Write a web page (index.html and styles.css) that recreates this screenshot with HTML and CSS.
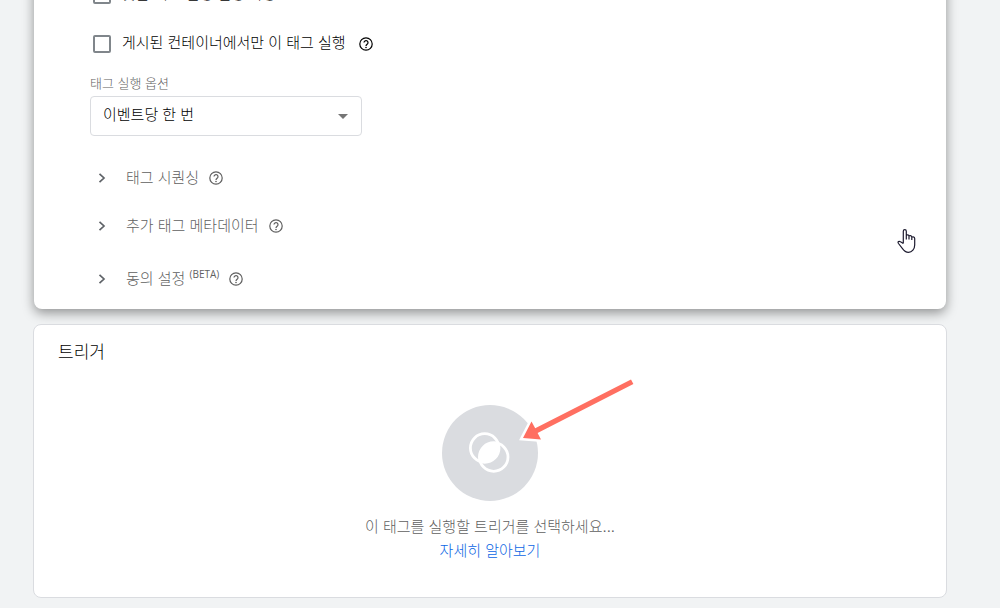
FILE: index.html
```html
<!DOCTYPE html>
<html lang="ko">
  <head>
    <meta charset="UTF-8" />
    <meta name="viewport" content="width=device-width, initial-scale=1.0" />
    <title>태그 구성</title>
    <link rel="stylesheet" href="styles.css">
  </head>

  <body>
    <svg class="symbols" aria-hidden="true">
      <symbol id="help" viewBox="0 0 14 14">
        <circle cx="7" cy="7" r="6.2" fill="none" stroke="currentColor" stroke-width="1.2" />
        <path d="M5 5.600a2 2 0 1 1 3.300 1.500C7.500 7.700 7 8 7 8.900" fill="none" stroke="currentColor" stroke-width="1.2" />
        <circle cx="7" cy="10.500" r="0.800" fill="currentColor" />
      </symbol>
      <symbol id="chevron" viewBox="0 0 8 10">
        <path d="M1.500 .8 6 5 1.500 9.200" fill="none" stroke="currentColor" stroke-width="1.700" />
      </symbol>
    </svg>

    <main>
      <section class="card settings">
        <div class="check-row">
          <input type="checkbox" id="schedule" />
          <label for="schedule">맞춤 태그 실행 일정 사용</label>
        </div>
        <div class="check-row">
          <input type="checkbox" id="published" />
          <label for="published">게시된 컨테이너에서만 이 태그 실행</label>
          <button class="help" aria-label="도움말"><svg><use href="#help" /></svg></button>
        </div>

        <label class="field-label" for="firing">태그 실행 옵션</label>
        <div class="select">
          <select id="firing">
            <option>이벤트당 한 번</option>
          </select>
        </div>

        <div class="expanders">
          <div class="expander">
            <button class="toggle" aria-expanded="false"><svg><use href="#chevron" /></svg><span>태그 시퀀싱</span></button>
            <button class="help" aria-label="도움말"><svg><use href="#help" /></svg></button>
          </div>
          <div class="expander">
            <button class="toggle" aria-expanded="false"><svg><use href="#chevron" /></svg><span>추가 태그 메타데이터</span></button>
            <button class="help" aria-label="도움말"><svg><use href="#help" /></svg></button>
          </div>
          <div class="expander consent">
            <button class="toggle" aria-expanded="false"><svg><use href="#chevron" /></svg><span>동의 설정 <sup>(BETA)</sup></span></button>
            <button class="help" aria-label="도움말"><svg><use href="#help" /></svg></button>
          </div>
        </div>

        <svg class="cursor" viewBox="0 0 20 26" aria-hidden="true">
          <path d="M6.300 15.500V3.200C6.300 1 9.300 1 9.300 3.200V11.500M9.300 7.600C9.300 6.500 12 6.500 12 8V11.500M12 8.300C12 7.300 14.800 7.500 14.800 9V12M14.800 9.500C14.800 8.500 17.700 8.500 17.700 10.500V17C17.700 21 15 24.300 11.500 24.300 8.500 24.300 6.800 22.500 5.300 20.300L1.500 15.500C.3 13.700 2 12.800 3.500 13.800L6.300 15.500" fill="#fff" stroke="#1c1a2e" stroke-width="1.200" stroke-linejoin="round" />
        </svg>
      </section>

      <section class="card trigger">
        <h2>트리거</h2>
        <div class="empty">
          <button class="choose" aria-label="트리거 선택">
            <svg class="rings" viewBox="0 0 42 42">
              <circle cx="15.700" cy="16" r="14.300" fill="none" stroke="#fff" stroke-width="2.800" />
              <circle cx="24.700" cy="25" r="14.300" fill="none" stroke="#fff" stroke-width="2.800" />
              <path d="M29.200 11.500A14.300 14.300 0 0 1 11.200 29.500 14.300 14.300 0 0 1 29.200 11.500Z" fill="#fff" />
            </svg>
          </button>
          <svg class="arrow" viewBox="0 0 120 68" aria-hidden="true">
            <path d="M4 62 12.500 45.500 16.200 52.200 112 3.500 114.400 8 18.600 57 22 63.500Z" fill="#ff6f61" stroke="#fff" stroke-width="5" paint-order="stroke" />
          </svg>
          <p>이 태그를 실행할 트리거를 선택하세요...</p>
          <a href="#">자세히 알아보기</a>
        </div>
      </section>
    </main>
  </body>
</html>
```
FILE: styles.css
```css
* {
  box-sizing: border-box;
}
html {
  overflow: hidden;
}
body {
  margin: 0;
  background-color: #f1f3f4;
  color: #000;
  font-family: "Liberation Sans", "Noto Sans CJK KR", sans-serif;
  font-size: 15px;
  font-weight: 300;
  line-height: 24px;
}
button {
  padding: 0;
  border: none;
  background: none;
  color: inherit;
  font: inherit;
  cursor: pointer;
}
.symbols {
  position: absolute;
  width: 0;
  height: 0;
}
/* the panel is scrolled past its first option */
main {
  display: flex;
  flex-direction: column;
  gap: 15px;
  margin: -30px 53px 0 33px;
}
.card {
  position: relative;
  background-color: #fff;
  border-radius: 8px;
}
.settings {
  margin: 0 1px;
  padding: 0 56px 18px;
  box-shadow: 0 4px 12px rgba(0, 0, 0, 0.4);
}
.check-row {
  display: flex;
  align-items: center;
  height: 49px;
  padding-left: 3px;
}
.check-row input {
  appearance: none;
  width: 18px;
  height: 18px;
  margin: 0 11px 0 0;
  border: 2px solid #80868b;
  border-radius: 2px;
}
.check-row label {
  padding-bottom: 2px;
}
.check-row .help {
  margin-left: 13px;
}
.help {
  width: 14px;
  height: 14px;
}
.help svg {
  display: block;
  width: 14px;
  height: 14px;
}
.field-label {
  display: block;
  margin-top: 4px;
  color: #5f5f5f;
  font-size: 13px;
}
.select {
  position: relative;
  width: 272px;
}
.select::after {
  content: "";
  position: absolute;
  top: 18px;
  right: 14px;
  border: 5px solid transparent;
  border-top-color: #757575;
  border-bottom: none;
}
select {
  appearance: none;
  display: block;
  width: 100%;
  height: 40px;
  padding: 0 12px 2px;
  border: 1px solid #dadce0;
  border-radius: 4px;
  background-color: #fff;
  color: inherit;
  font: inherit;
}
.expanders {
  display: flex;
  flex-direction: column;
  gap: 24px;
  margin-top: 30px;
  color: #5f5f5f;
}
.expander {
  display: flex;
  align-items: center;
  gap: 10px;
}
.toggle {
  display: flex;
  align-items: center;
  gap: 20px;
  padding-left: 8px;
}
.toggle svg {
  width: 8px;
  height: 10px;
  color: #5f6368;
}
.consent {
  margin-top: 5px;
}
sup {
  font-family: "Open Sans", sans-serif;
  font-size: 10px;
  font-weight: 400;
  line-height: 0;
}
.cursor {
  position: absolute;
  right: 29px;
  bottom: 55px;
  width: 20px;
  height: 26px;
}
.trigger {
  padding: 16px 24px 34px;
  border: 1px solid #dadce0;
}
h2 {
  margin: 0;
  font-size: 17px;
  font-weight: 300;
}
.empty {
  position: relative;
  display: flex;
  flex-direction: column;
  align-items: center;
  margin-top: 40px;
}
.choose {
  display: grid;
  place-items: center;
  width: 96px;
  height: 96px;
  border-radius: 50%;
  background-color: #dadce0;
}
.rings {
  width: 42px;
  height: 42px;
}
.arrow {
  position: absolute;
  top: -29px;
  left: calc(50% + 29px);
  width: 120px;
  height: 68px;
}
.empty p {
  margin: 14px 0 0;
  color: #5f5f5f;
}
.empty a {
  color: #0b66e4;
  text-decoration: none;
}
```
